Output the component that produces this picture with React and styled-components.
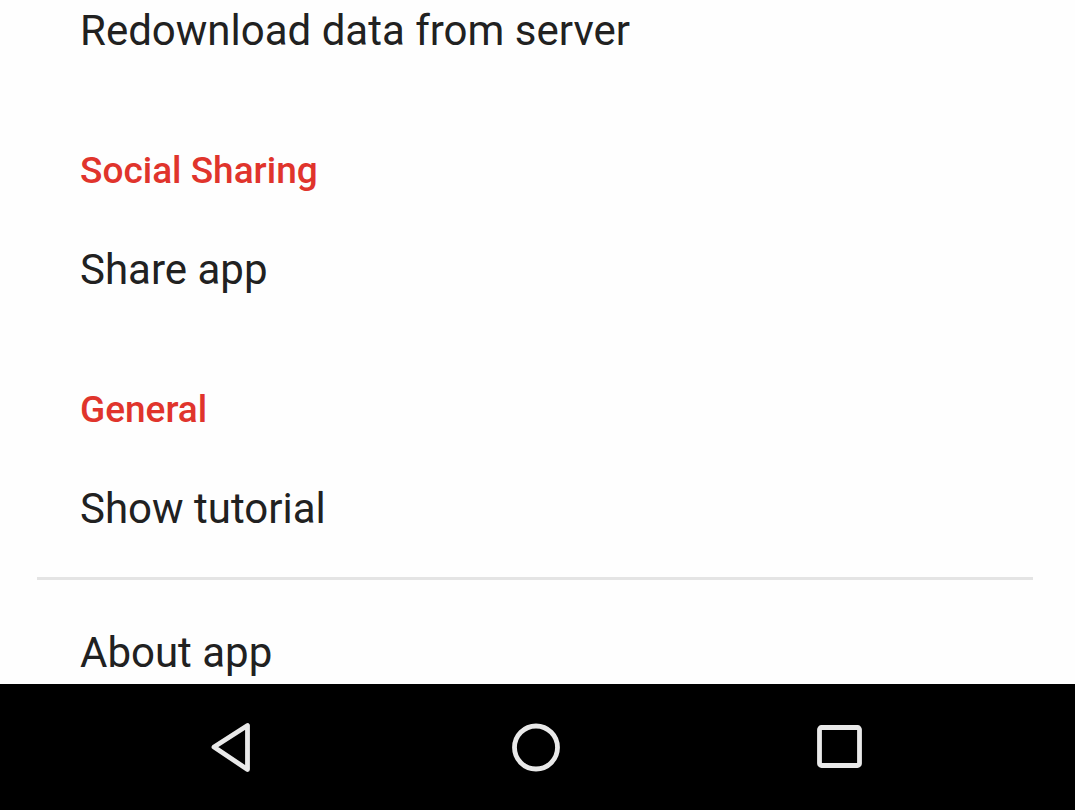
import React from "react";
import styled, { createGlobalStyle } from "styled-components";

const Global = createGlobalStyle`
  html, body { margin: 0; padding: 0; background: #fff; }
  body { font-family: Roboto, "Noto Sans", sans-serif; -webkit-font-smoothing: antialiased; }
`;

const Screen = styled.div`
  width: 1075px;
  height: 810px;
  display: flex;
  flex-direction: column;
  overflow: hidden;
  background: #fefefe;
`;

const Content = styled.div`
  height: 684px;
  flex: none;
  overflow: hidden;
`;

const List = styled.div`
  display: flex;
  flex-direction: column;
  margin-top: -16px;
`;

const Item = styled.div`
  padding: 24px 0 24px 80px;
  font-size: 42px;
  line-height: 45px;
  color: #212121;
  white-space: nowrap;
`;

const Category = styled.div`
  padding: 74px 0 33px 80px;
  font-size: 37px;
  line-height: 39px;
  font-weight: 500;
  color: #e0342c;
  white-space: nowrap;
`;

const Divider = styled.div`
  height: 3px;
  margin: 22px 42px 26px 37px;
  background: #e4e4e4;
`;

const NavBar = styled.div`
  flex: 1;
  background: #000;
  display: flex;
  align-items: center;
  justify-content: center;
  gap: 240px;
  padding-right: 3px;
  box-sizing: border-box;
`;

const NavButton = styled.div`
  width: 64px;
  height: 64px;
  display: flex;
  align-items: center;
  justify-content: center;
`;

const ICON = "#e9e9e9";

const BackIcon = () => (
  <svg width="64" height="64" viewBox="0 0 64 64">
    <path d="M14 32 L47.5 10.5 L47.5 54.5 Z" fill="none" stroke={ICON} strokeWidth="4.8" strokeLinejoin="round" />
  </svg>
);

const HomeIcon = () => (
  <svg width="64" height="64" viewBox="0 0 64 64">
    <circle cx="32" cy="32.5" r="21.5" fill="none" stroke={ICON} strokeWidth="4.8" />
  </svg>
);

const RecentIcon = () => (
  <svg width="64" height="64" viewBox="0 0 64 64">
    <rect x="11.5" y="12.5" width="40" height="38" rx="2" fill="none" stroke={ICON} strokeWidth="4.8" />
  </svg>
);

export default function App() {
  return (
    <>
      <Global />
      <Screen>
        <Content>
          <List>
            <Item>Redownload data from server</Item>
            <Category>Social Sharing</Category>
            <Item>Share app</Item>
            <Category>General</Category>
            <Item>Show tutorial</Item>
            <Divider />
            <Item>About app</Item>
          </List>
        </Content>
        <NavBar>
          <NavButton><BackIcon /></NavButton>
          <NavButton><HomeIcon /></NavButton>
          <NavButton><RecentIcon /></NavButton>
        </NavBar>
      </Screen>
    </>
  );
}
